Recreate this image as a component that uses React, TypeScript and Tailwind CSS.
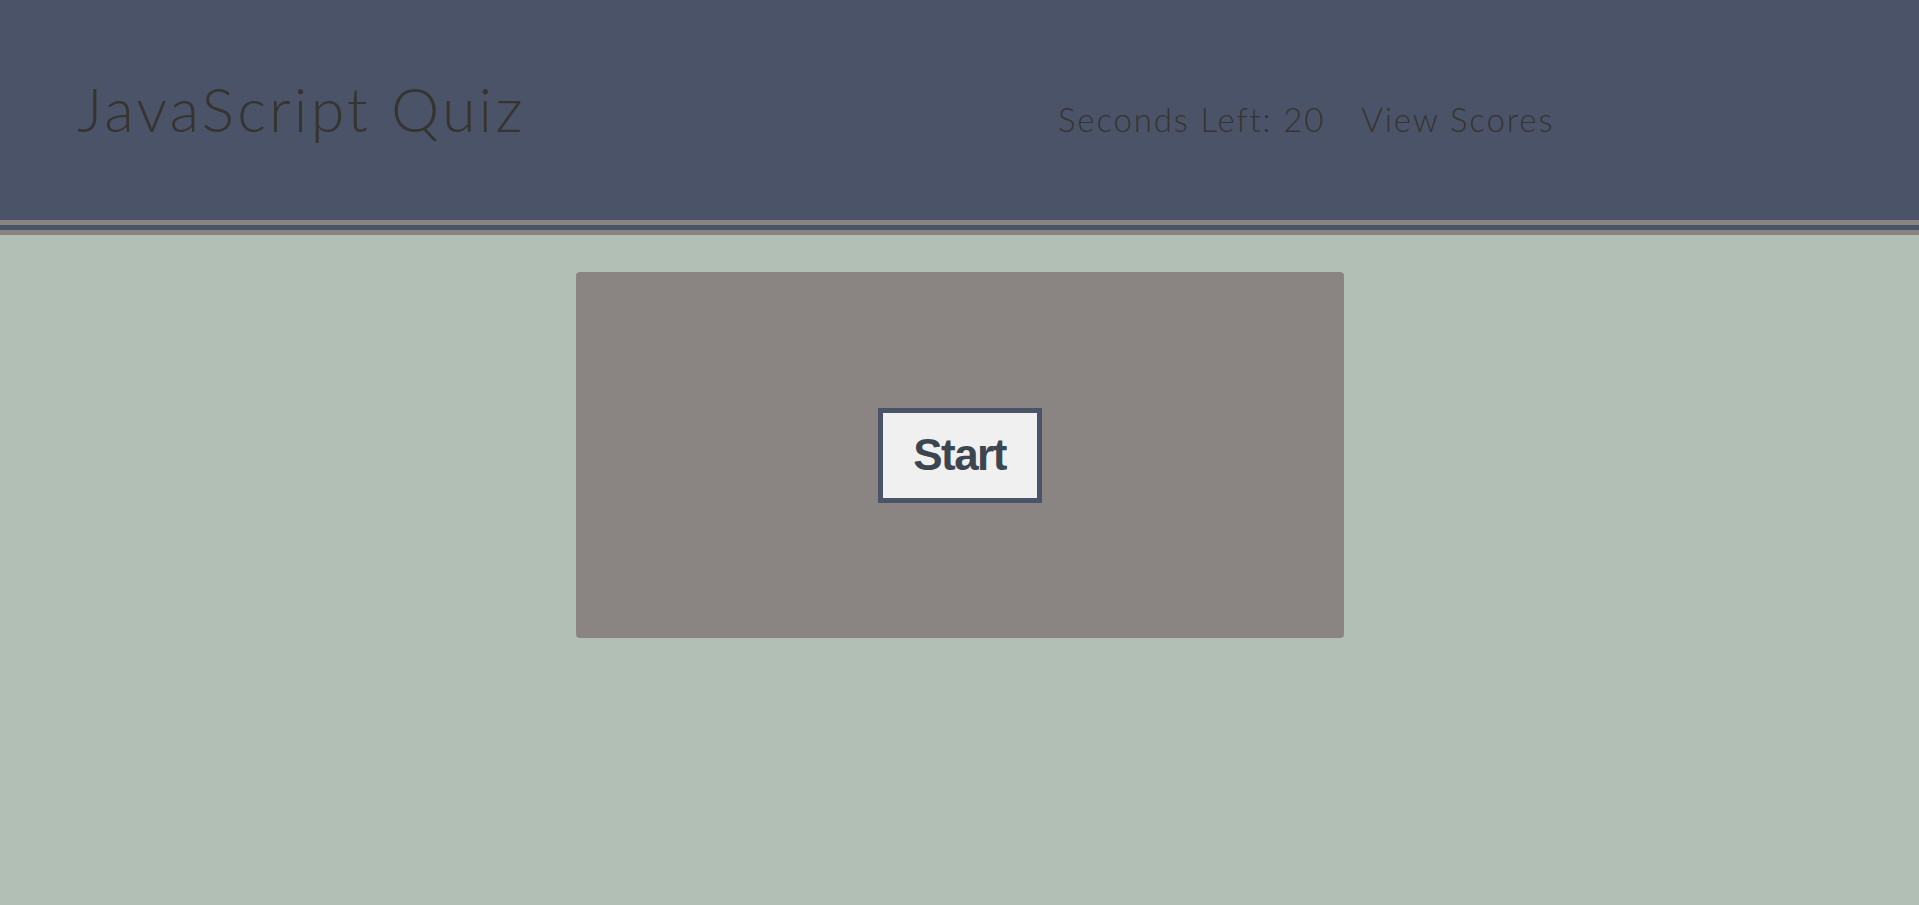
import React from "react";

export default function App() {
  return (
    <div className="min-h-screen bg-[#b1bfb5] font-['Lato',sans-serif]">
      <header className="bg-[#4b5369] h-[220px] relative">
        <div className="flex items-baseline pt-[78px] pl-[77px]">
          <h1 className="text-[61px] leading-none font-light tracking-[3.2px] text-[#35342f] w-[981px] shrink-0">
            JavaScript Quiz
          </h1>
          <div className="flex items-baseline gap-[36px] text-[33px] leading-none font-light tracking-[1.85px] text-[#35342f]">
            <span>Seconds Left: 20</span>
            <span>View Scores</span>
          </div>
        </div>
      </header>
      <div className="h-[5px] bg-[#8a8480]" />
      <div className="h-[5px] bg-[#4b5369]" />
      <div className="h-[5px] bg-[#8a8480]" />
      <main className="flex justify-center pt-[37px]">
        <div className="w-[768px] h-[366px] bg-[#8a8582] rounded-[4px] flex items-center justify-center">
          <button className="w-[164px] h-[95px] border-[5px] border-[#4b5369] bg-[#f0f0f0] text-[#3c4650] font-bold text-[44px] font-['Liberation_Sans',sans-serif] tracking-[-1.5px] flex items-center justify-center">
            Start
          </button>
        </div>
      </main>
    </div>
  );
}
